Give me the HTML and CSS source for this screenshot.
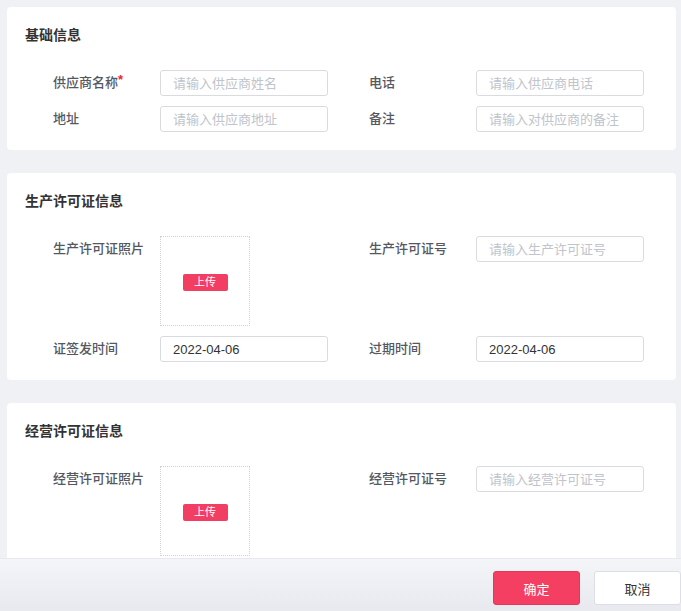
FILE: index.html
```html
<!DOCTYPE html>
<html lang="zh-CN">

<head>
    <meta charset="UTF-8">
    <meta name="viewport" content="width=device-width, initial-scale=1.0">
    <title>供应商信息</title>
    <link rel="stylesheet" href="styles.css">
</head>

<body>
    <div class="page">
        <main class="content">
            <!-- 基础信息 -->
            <section class="card">
                <h2 class="card-title">基础信息</h2>
                <div class="form-grid">
                    <div class="field">
                        <label class="label">供应商名称<span class="required">*</span></label>
                        <input class="input" type="text" placeholder="请输入供应商姓名">
                    </div>
                    <div class="field">
                        <label class="label">电话</label>
                        <input class="input" type="text" placeholder="请输入供应商电话">
                    </div>
                    <div class="field">
                        <label class="label">地址</label>
                        <input class="input" type="text" placeholder="请输入供应商地址">
                    </div>
                    <div class="field">
                        <label class="label">备注</label>
                        <input class="input" type="text" placeholder="请输入对供应商的备注">
                    </div>
                </div>
            </section>

            <!-- 生产许可证信息 -->
            <section class="card">
                <h2 class="card-title">生产许可证信息</h2>
                <div class="form-grid">
                    <div class="field">
                        <label class="label">生产许可证照片</label>
                        <div class="upload-box">
                            <button class="upload-btn" type="button">上传</button>
                        </div>
                    </div>
                    <div class="field">
                        <label class="label">生产许可证号</label>
                        <input class="input" type="text" placeholder="请输入生产许可证号">
                    </div>
                    <div class="field">
                        <label class="label">证签发时间</label>
                        <input class="input" type="text" value="2022-04-06">
                    </div>
                    <div class="field">
                        <label class="label">过期时间</label>
                        <input class="input" type="text" value="2022-04-06">
                    </div>
                </div>
            </section>

            <!-- 经营许可证信息 -->
            <section class="card">
                <h2 class="card-title">经营许可证信息</h2>
                <div class="form-grid">
                    <div class="field">
                        <label class="label">经营许可证照片</label>
                        <div class="upload-box">
                            <button class="upload-btn" type="button">上传</button>
                        </div>
                    </div>
                    <div class="field">
                        <label class="label">经营许可证号</label>
                        <input class="input" type="text" placeholder="请输入经营许可证号">
                    </div>
                </div>
            </section>
        </main>

        <footer class="footer">
            <button class="btn btn-primary" type="button">确定</button>
            <button class="btn btn-default" type="button">取消</button>
        </footer>
    </div>
</body>

</html>
```

FILE: styles.css
```css
html,
body {
    margin: 0;
    padding: 0;
    height: 100%;
}

body {
    font-family: "Liberation Sans", "Noto Sans CJK SC", sans-serif;
    background-color: #f0f1f5;
    color: #333;
}

.page {
    display: flex;
    flex-direction: column;
    height: 100vh;
}

.content {
    flex: 1;
    overflow: hidden;
    padding: 7px 5px 0 7px;
}

.card {
    background-color: #fff;
    border-radius: 4px;
    padding: 18px 32px 18px 46px;
    margin-bottom: 23px;
}

.card-title {
    margin: 0 0 25px -28px;
    font-size: 14px;
    line-height: 20px;
    font-weight: 600;
    color: #333;
}

.form-grid {
    display: grid;
    grid-template-columns: 275px 275px;
    column-gap: 41px;
    row-gap: 10px;
}

.field {
    display: flex;
    align-items: flex-start;
}

.label {
    width: 107px;
    flex-shrink: 0;
    font-size: 13px;
    font-weight: 500;
    line-height: 26px;
    color: #55585f;
}

.required {
    color: #f5222d;
    font-size: 13px;
    font-weight: 700;
    vertical-align: top;
    line-height: 20px;
}

.input {
    box-sizing: border-box;
    width: 168px;
    height: 26px;
    padding: 0 12px;
    border: 1px solid #d9dbe1;
    border-radius: 3px;
    font-family: inherit;
    font-size: 13px;
    color: #333;
    outline: none;
}

.input::placeholder {
    color: #c0c4cc;
}

.upload-box {
    box-sizing: border-box;
    width: 90px;
    height: 90px;
    border: 1px dotted #cfd1d6;
    display: flex;
    align-items: center;
    justify-content: center;
}

.upload-btn {
    width: 45px;
    height: 17px;
    padding: 0;
    margin-top: 2px;
    border: none;
    border-radius: 2px;
    background-color: #f13e62;
    color: #fff;
    font-family: inherit;
    font-size: 11px;
    line-height: 17px;
}

.footer {
    height: 53px;
    box-sizing: border-box;
    padding-top: 12px;
    display: flex;
    justify-content: flex-end;
    gap: 14px;
    border-top: 1px solid #e8e9ee;
    background: linear-gradient(#f4f5f9, #e8e9ee);
}

.btn {
    width: 87px;
    height: 34px;
    border-radius: 3px;
    font-family: inherit;
    font-size: 13px;
    cursor: pointer;
}

.btn-primary {
    background-color: #f43f63;
    border: 1px solid #e6375a;
    color: #fff;
}

.btn-default {
    background-color: #fff;
    border: 1px solid #dcdfe6;
    color: #333;
}
```
